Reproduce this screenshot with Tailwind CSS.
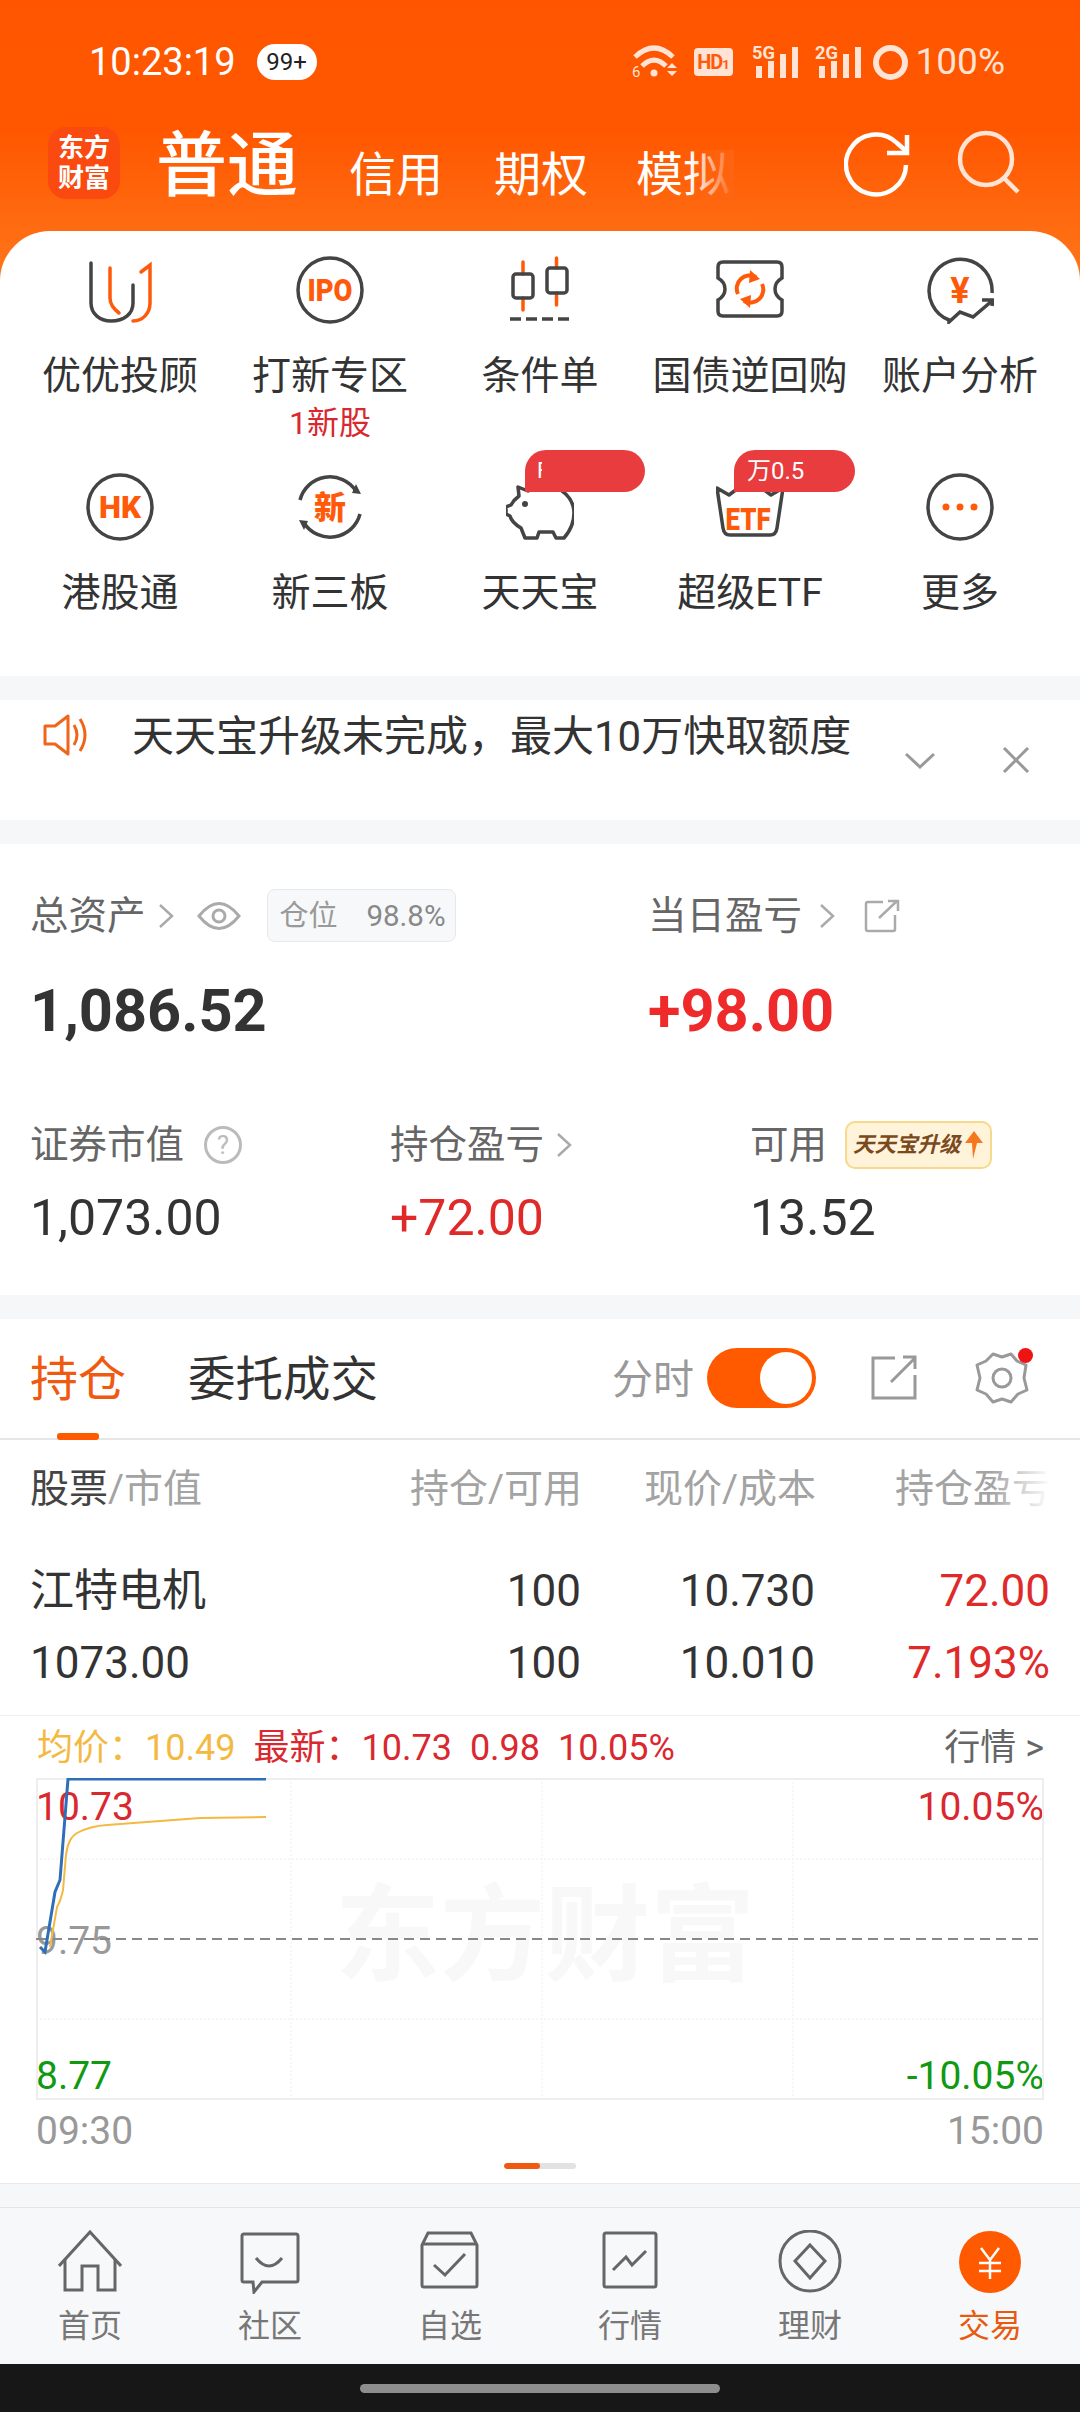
<!DOCTYPE html>
<html lang="zh-CN">
  <head>
    <meta charset="UTF-8" />
    <meta name="viewport" content="width=device-width, initial-scale=1.0" />
    <title>交易</title>
    <script src="https://cdn.jsdelivr.net/npm/@tailwindcss/browser@4"></script>
  </head>
  <body class="w-[1080px] h-[2412px] overflow-hidden bg-[#f6f7f9] font-['Roboto','Noto_Sans_CJK_SC',sans-serif] text-[#333]">
    <!-- orange header + shortcut sheet -->
    <div class="bg-[linear-gradient(180deg,#ff5500_0,#ff5700_130px,#ff7a1e_300px,#ff7a1e_100%)]">
      <!-- status bar -->
      <div class="h-[122px] flex items-center pl-[89px] pr-[75px] pt-[2px] text-white">
        <span class="text-[38px] leading-[44px]">10:23:19</span>
        <span class="ml-[21px] w-[60px] h-[36px] rounded-[18px] bg-white text-[#222] text-[24px] leading-[36px] text-center">99+</span>
        <div class="ml-auto flex items-center text-[#ffe3d4]">
          <svg width="46" height="36" viewBox="0 0 46 36" fill="none" stroke="currentColor" stroke-width="5">
            <path d="M3 13 Q22 -5 41 13" /><path d="M10 22 Q22 10 34 22" />
            <circle cx="22" cy="29" r="3.500" fill="currentColor" stroke="none" />
            <path d="M35 24 l5 -5 l5 5 z M35 27 l5 5 l5 -5 z" fill="currentColor" stroke="none" />
            <text x="0" y="33" font-size="15" font-family="Roboto" fill="currentColor" stroke="none">6</text>
          </svg>
          <span class="ml-[16px] w-[39px] h-[28px] rounded-[4px] bg-[#ffe3d4] text-[#ff5a0a] text-[20px] leading-[28px] font-bold text-center tracking-[-1px]">HD<span class="text-[13px]">1</span></span>
          <svg class="ml-[19px]" width="48" height="42" viewBox="0 -4 48 42" fill="currentColor">
            <text x="0" y="14" font-size="18" font-weight="700" font-family="Roboto" textLength="23" lengthAdjust="spacingAndGlyphs">5G</text>
            <rect x="4" y="21" width="6" height="12" /><rect x="16" y="16" width="6" height="17" /><rect x="28" y="9" width="6" height="24" /><rect x="40" y="2" width="6" height="31" />
          </svg>
          <svg class="ml-[15px]" width="48" height="42" viewBox="0 -4 48 42" fill="currentColor">
            <text x="0" y="14" font-size="18" font-weight="700" font-family="Roboto" textLength="23" lengthAdjust="spacingAndGlyphs">2G</text>
            <rect x="4" y="21" width="6" height="12" /><rect x="16" y="16" width="6" height="17" /><rect x="28" y="9" width="6" height="24" /><rect x="40" y="2" width="6" height="31" />
          </svg>
          <span class="ml-[10px] w-[35px] h-[35px] rounded-full border-[6px] border-[#ffe3d4]"></span>
          <span class="ml-[8px] text-[37px] leading-[44px]">100%</span>
        </div>
      </div>
      <!-- account type tabs -->
      <div class="h-[109px] flex items-start pl-[48px] text-white">
        <div class="mt-[5px] w-[72px] h-[72px] rounded-[18px] bg-[#fb4a10] flex items-center justify-center text-[26px] leading-[30px] font-bold text-center">东方<br />财富</div>
        <span class="ml-[36px] mt-[8px] text-[71px] leading-[72px] font-medium">普通</span>
        <span class="ml-[51px] mt-[28px] text-[47px] leading-[50px]">信用</span>
        <span class="ml-[51px] mt-[28px] text-[47px] leading-[50px]">期权</span>
        <span class="relative ml-[48px] mt-[28px] text-[47px] leading-[50px]">模拟<span class="absolute right-[-4px] top-0 h-full w-[44px] bg-[linear-gradient(90deg,#ff641200,#ff6412)]"></span></span>
        <svg class="ml-[114px] mt-[9px]" width="66" height="66" viewBox="0 0 66 66" fill="none" stroke="#fff" stroke-width="4.5">
          <path d="M62 34 A30 30 0 1 1 53 12 L62 20" /><path d="M63 4 V22 H43" />
        </svg>
        <svg class="ml-[46px] mt-[7px]" width="66" height="66" viewBox="0 0 66 66" fill="none" stroke="#ffe3d4" stroke-width="4.5">
          <circle cx="30" cy="30" r="26" /><path d="M48 49 L62 63" />
        </svg>
      </div>

      <div class="bg-white rounded-t-[50px] h-[445px] px-[15px] grid grid-cols-5 grid-rows-[242px_203px] text-[#333]">
        <div class="flex flex-col items-center pt-[25px]">
          <svg width="68" height="68" viewBox="0 0 68 68" fill="none" stroke-width="3.5" stroke-linecap="round">
            <path stroke="#444" d="M5 7 V47 C5 58 14 65 25 65 C38 65 47 58 47 47 V29" />
            <path stroke="#ff5a0a" d="M24 12 V42 Q24 50 33 57" />
            <path stroke="#ff5a0a" d="M55 16 L64 9 V47 C64 58 56 65 47 65" />
          </svg>
          <span class="mt-[27px] text-[39px] leading-[50px]">优优投顾</span>
        </div>
        <div class="flex flex-col items-center pt-[25px]">
          <svg width="68" height="68" viewBox="0 0 68 68" fill="none">
            <circle cx="34" cy="34" r="32" stroke="#444" stroke-width="3.5" />
            <text x="34" y="45" text-anchor="middle" font-family="Roboto" font-weight="900" font-size="31" fill="#ff5a0a" textLength="45" lengthAdjust="spacingAndGlyphs">IPO</text>
          </svg>
          <span class="mt-[27px] text-[39px] leading-[50px]">打新专区</span>
          <span class="mt-[7px] text-[32px] leading-[30px] text-[#d9282f]">1新股</span>
        </div>
        <div class="flex flex-col items-center pt-[25px]">
          <svg width="68" height="68" viewBox="0 0 68 68" fill="none" stroke-width="3.5">
            <path stroke="#ff5a0a" stroke-linecap="round" d="M17 6 V18 M17 42 V54 M50.500 2 V12 M50.500 37 V49" />
            <rect x="7" y="18" width="20" height="24" rx="3" stroke="#444" />
            <rect x="41" y="12" width="20" height="25" rx="3" stroke="#444" />
            <path stroke="#444" stroke-dasharray="11 5" d="M4 63 H65" />
          </svg>
          <span class="mt-[27px] text-[39px] leading-[50px]">条件单</span>
        </div>
        <div class="flex flex-col items-center pt-[25px]">
          <svg width="68" height="68" viewBox="0 0 68 68" fill="none" stroke-width="3.5">
            <path stroke="#444" d="M7 6 H61 Q66 6 66 11 V22 Q59 26 59 33 Q59 40 66 44 V55 Q66 60 61 60 H7 Q2 60 2 55 V44 Q9 40 9 33 Q9 26 2 22 V11 Q2 6 7 6 Z" />
            <path stroke="#ff5a0a" stroke-width="4" d="M22 38 A13 13 0 0 1 40 21 M46 28 A13 13 0 0 1 28 45" />
            <path fill="#ff5a0a" d="M34 14 L44 23 L33 27 Z M34 52 L24 43 L35 39 Z" />
          </svg>
          <span class="mt-[27px] text-[39px] leading-[50px]">国债逆回购</span>
        </div>
        <div class="flex flex-col items-center pt-[25px]">
          <svg width="68" height="68" viewBox="0 0 68 68" fill="none" stroke="#444" stroke-width="3.5">
            <path d="M66 37 A31.500 31.500 0 1 0 23 64 L23 66 L34 56 L47 61 L67 44 M56 44 H67 L66 50" />
            <text x="34" y="47" text-anchor="middle" font-family="Roboto" font-weight="700" font-size="36" fill="#ff5a0a" stroke="none">¥</text>
          </svg>
          <span class="mt-[27px] text-[39px] leading-[50px]">账户分析</span>
        </div>

        <div class="flex flex-col items-center">
          <svg width="68" height="68" viewBox="0 0 68 68" fill="none">
            <circle cx="34" cy="34" r="32" stroke="#444" stroke-width="3.5" />
            <text x="34" y="45" text-anchor="middle" font-family="Roboto" font-weight="900" font-size="31" fill="#ff5a0a" textLength="42" lengthAdjust="spacingAndGlyphs">HK</text>
          </svg>
          <span class="mt-[27px] text-[39px] leading-[50px]">港股通</span>
        </div>
        <div class="flex flex-col items-center">
          <svg width="68" height="68" viewBox="0 0 68 68" fill="none">
            <path stroke="#444" stroke-width="3.500" d="M4 27 A31 31 0 0 1 60 18 M64 41 A31 31 0 0 1 8 50" />
            <path fill="#444" d="M60 11 L65 21 L56 20 Z M8 57 L3 47 L12 48 Z" />
            <text x="34" y="46" text-anchor="middle" font-weight="900" font-size="32" fill="#ff5a0a" font-family="Noto Sans CJK SC">新</text>
          </svg>
          <span class="mt-[27px] text-[39px] leading-[50px]">新三板</span>
        </div>
        <div class="relative flex flex-col items-center">
          <svg width="68" height="68" viewBox="0 0 68 68" fill="none" stroke="#444" stroke-width="3.500" stroke-linejoin="round">
            <path d="M12 14 L22 18 C28 15 34 13 40 13 C56 13 68 26 68 40 C68 50 64 58 58 65 H50 L47 59 H33 L31 65 H19 L15 55 C10 52 5 47 4 43 L0 41 V34 L5 32 C7 28 9 26 13 23 Z" />
            <circle cx="19" cy="31" r="3" fill="#444" stroke="none" />
          </svg>
          <span class="mt-[27px] text-[39px] leading-[50px]">天天宝</span>
          <span class="absolute left-[90px] top-[-23px] w-[120px] h-[42px] rounded-[21px] rounded-bl-none bg-[#e83c3f] text-white text-[22px] leading-[42px] pl-[12px]"><span class="inline-block w-[5px] overflow-hidden align-top">F</span></span>
        </div>
        <div class="relative flex flex-col items-center">
          <svg width="68" height="68" viewBox="0 0 68 68" fill="none" stroke="#444" stroke-width="3.500" stroke-linejoin="round">
            <path d="M1 15 L7 55 Q8 62 14 62 H54 Q60 62 61 55 L67 15 L55 22 L47 16 H21 L13 22 Z" />
            <text x="32" y="57" text-anchor="middle" font-family="Roboto" font-weight="900" font-size="31" fill="#ff5a0a" stroke="none" textLength="45" lengthAdjust="spacingAndGlyphs">ETF</text>
          </svg>
          <span class="mt-[27px] text-[39px] leading-[50px]">超级ETF</span>
          <span class="absolute left-[89px] top-[-23px] w-[121px] h-[42px] rounded-[21px] rounded-bl-none bg-[#e83c3f] text-white text-[24px] leading-[42px] pl-[13px]">万0.5</span>
        </div>
        <div class="flex flex-col items-center">
          <svg width="68" height="68" viewBox="0 0 68 68" fill="none">
            <circle cx="34" cy="34" r="32" stroke="#444" stroke-width="3.5" />
            <circle cx="20" cy="34" r="3.500" fill="#ff5a0a" /><circle cx="34" cy="34" r="3.500" fill="#ff5a0a" /><circle cx="48" cy="34" r="3.500" fill="#ff5a0a" />
          </svg>
          <span class="mt-[27px] text-[39px] leading-[50px]">更多</span>
        </div>
      </div>
    </div>

    <!-- notice -->
    <div class="mt-[24px] h-[120px] bg-white flex items-start pl-[43px]">
      <svg class="mt-[14px]" width="48" height="42" viewBox="0 0 48 42" fill="none" stroke="#f0651a" stroke-width="3" stroke-linejoin="round">
        <path d="M2 12 H12 L25 2 V40 L12 30 H2 Z" /><path d="M31 11 Q37 21 31 31" /><path d="M37 5 Q47 21 37 37" />
      </svg>
      <span class="ml-[41px] mt-[12px] text-[42px] leading-[50px] text-[#333]">天天宝升级未完成，最大10万快取额度</span>
      <svg class="ml-[53px] mt-[52px]" width="32" height="17" viewBox="0 0 32 17" fill="none" stroke="#999" stroke-width="3"><path d="M2 2 L16 15 L30 2" /></svg>
      <svg class="ml-[66px] mt-[47px]" width="28" height="26" viewBox="0 0 28 26" fill="none" stroke="#999" stroke-width="3"><path d="M2 1 L26 25 M26 1 L2 25" /></svg>
    </div>

    <!-- assets -->
    <div class="mt-[24px] h-[451px] bg-white pl-[30px] pt-[45px]">
      <div class="flex">
        <div class="w-[618px]">
          <div class="flex items-center h-[53px] text-[38.500px] leading-[50px] text-[#666]">
            <span>总资产</span>
            <svg class="ml-[12px]" width="16" height="26" viewBox="0 0 16 26" fill="none" stroke="#aaa" stroke-width="2.500"><path d="M2 2 L14 13 L2 24" /></svg>
            <svg class="ml-[23px]" width="44" height="30" viewBox="0 0 44 30" fill="none" stroke="#aaa" stroke-width="3"><path d="M2 15 Q22 -10 42 15 Q22 40 2 15 Z" /><circle cx="22" cy="15" r="6" /></svg>
            <span class="ml-[26px] w-[189px] h-[53px] rounded-[8px] border border-[#e8e8ea] bg-[#f7f8fa] flex items-center justify-between pl-[12px] pr-[9px] text-[#999]">
              <span class="text-[29px]">仓位</span><span class="text-[29.500px] text-[#888]">98.8%</span>
            </span>
          </div>
          <div class="mt-[34px] text-[59.500px] leading-[70px] font-bold text-[#333]">1,086.52</div>
        </div>
        <div>
          <div class="flex items-center h-[53px] text-[38.500px] leading-[50px] text-[#666]">
            <span>当日盈亏</span>
            <svg class="ml-[17px]" width="16" height="26" viewBox="0 0 16 26" fill="none" stroke="#aaa" stroke-width="2.500"><path d="M2 2 L14 13 L2 24" /></svg>
            <svg class="ml-[29px]" width="36" height="34" viewBox="0 0 36 34" fill="none" stroke="#aaa" stroke-width="2.500"><path d="M19 3 H4 Q2 3 2 5 V30 Q2 32 4 32 H29 Q31 32 31 30 V16" /><path d="M15 19 L33 2 M24 2 H34 V12" /></svg>
          </div>
          <div class="mt-[34px] text-[59.500px] leading-[70px] font-bold text-[#ee2a2a]">+98.00</div>
        </div>
      </div>
      <div class="mt-[75px] flex">
        <div class="w-[360px]">
          <div class="flex items-center h-[48px] text-[38.500px] leading-[50px] text-[#666]">
            <span>证券市值</span>
            <span class="ml-[20px] w-[38px] h-[38px] rounded-full border-[3px] border-[#bbb] text-[#bbb] text-[26px] leading-[32px] text-center">?</span>
          </div>
          <div class="mt-[19px] text-[50px] leading-[60px] text-[#333]">1,073.00</div>
        </div>
        <div class="w-[360px]">
          <div class="flex items-center h-[48px] text-[38.500px] leading-[50px] text-[#666]">
            <span>持仓盈亏</span>
            <svg class="ml-[12px]" width="16" height="26" viewBox="0 0 16 26" fill="none" stroke="#aaa" stroke-width="2.500"><path d="M2 2 L14 13 L2 24" /></svg>
          </div>
          <div class="mt-[19px] text-[50px] leading-[60px] text-[#e02a2a]">+72.00</div>
        </div>
        <div>
          <div class="flex items-center h-[48px] text-[38.500px] leading-[50px] text-[#666]">
            <span>可用</span>
            <span class="ml-[18px] w-[147px] h-[48px] rounded-[10px] border-2 border-[#f6d98a] bg-[#fff3da] flex items-center pl-[6px] text-[21.5px] font-bold italic text-[#7a4a1e]">
              天天宝升级
              <svg class="ml-[3px]" width="20" height="30" viewBox="0 0 20 30"><path fill="#f7771e" d="M10 1 L19 13 H13 L9 29 L8 13 H1 Z" /></svg>
            </span>
          </div>
          <div class="mt-[19px] text-[50px] leading-[60px] text-[#333]">13.52</div>
        </div>
      </div>
    </div>

    <!-- positions -->
    <div class="mt-[24px] h-[865px] bg-white border-b border-[#e9e9e9]">
      <div class="relative h-[121px] border-b-2 border-[#e6e6e6] flex items-center pl-[30px] pr-[50px] pb-[2px]">
        <span class="pt-[5px] text-[48px] leading-[60px] text-[#f05a10]">持仓</span>
        <span class="pt-[5px] ml-[62px] text-[47.5px] leading-[60px] text-[#333]">委托成交</span>
        <span class="pt-[5px] ml-auto text-[41px] leading-[60px] text-[#999]">分时</span>
        <span class="ml-[13px] w-[109px] h-[60px] rounded-[30px] bg-[#ff5a00] flex items-center justify-end pr-[4px]"><span class="w-[52px] h-[52px] rounded-full bg-white"></span></span>
        <svg class="ml-[55px]" width="46" height="46" viewBox="0 0 46 46" fill="none" stroke="#999" stroke-width="3"><path d="M24 3 H2 V43 H44 V20" /><path d="M20 27 L44 3 M32 2 H44 V14" /></svg>
        <svg class="ml-[57px]" width="56" height="54" viewBox="0 0 56 54" fill="none" stroke="#999" stroke-width="3" stroke-linejoin="round">
          <path d="M19 3 L28 6 L37 3 L43 10 L52 14 L50 27 L53 39 L44 43 L37 51 L28 48 L19 51 L12 43 L3 39 L6 27 L3 14 L12 10 Z" />
          <circle cx="28" cy="27" r="9" />
        </svg>
        <span class="absolute left-[1018px] top-[29px] w-[15px] h-[15px] rounded-full bg-[#f01313]"></span>
        <span class="absolute left-[57px] bottom-[-2px] w-[42px] h-[7px] rounded-[3px] bg-[#ff5a00]"></span>
      </div>

      <div class="h-[98px] flex items-center pl-[30px] pr-[29px] text-[39px] leading-[50px] text-[#a3a3a3]">
        <span class="flex-1"><span class="text-[#444]">股票</span>/市值</span>
        <span class="w-[240px] text-right">持仓/可用</span>
        <span class="w-[234px] text-right">现价/成本</span>
        <span class="relative w-[235px] text-right">持仓盈亏<span class="absolute right-0 top-0 h-full w-[60px] bg-[linear-gradient(90deg,#ffffff00,#ffffff)]"></span></span>
      </div>
      <div class="mt-[23px] flex items-center h-[60px] pl-[30px] pr-[30px] text-[44px] leading-[60px]">
        <span class="flex-1 text-[44px]">江特电机</span>
        <span class="w-[240px] text-right">100</span>
        <span class="w-[234px] text-right">10.730</span>
        <span class="w-[235px] text-right text-[#e02a2a]">72.00</span>
      </div>
      <div class="mt-[12px] flex items-center h-[60px] pl-[30px] pr-[30px] text-[44px] leading-[60px]">
        <span class="flex-1">1073.00</span>
        <span class="w-[240px] text-right">100</span>
        <span class="w-[234px] text-right">10.010</span>
        <span class="w-[235px] text-right text-[#e02a2a]">7.193%</span>
      </div>

      <div class="mt-[22px] border-t border-[#eeeeee] pt-[7px] px-[36px]">
        <div class="flex gap-[18px] text-[36px] leading-[50px] text-[#d9282f] pl-[1px]">
          <span class="text-[#f4b942]">均价：10.49</span>
          <span>最新：10.73</span>
          <span>0.98</span>
          <span>10.05%</span>
          <span class="ml-auto text-[#666]">行情 &gt;</span>
        </div>
        <!-- minute chart -->
        <div class="relative mt-[5px] w-[1008px] h-[322px] overflow-hidden">
          <span class="absolute left-[299px] top-[94px] text-[105px] leading-[130px] font-bold text-[#f8f8f8] whitespace-nowrap">东方财富</span>
          <span class="absolute left-0 top-[9px] text-[39px] leading-[40px] text-[#d9282f]">10.73</span>
          <span class="absolute right-0 top-[9px] text-[39px] leading-[40px] text-[#d9282f]">10.05%</span>
          <span class="absolute left-0 top-[143px] text-[39px] leading-[40px] text-[#999]">9.75</span>
          <span class="absolute left-0 top-[278px] text-[39px] leading-[40px] text-[#119911]">8.77</span>
          <span class="absolute right-0 top-[278px] text-[39px] leading-[40px] text-[#119911]">-10.05%</span>
          <svg class="absolute inset-0" width="1008" height="322" viewBox="36 1778 1008 322" fill="none">
            <rect x="37" y="1779" width="1006" height="320" stroke="#eeeeee" stroke-width="2" />
            <path stroke="#eeeeee" stroke-dasharray="2 2" d="M291 1778 V2100 M542 1778 V2100 M793 1778 V2100 M36 1859 H1044 M36 2019 H1044" />
            <path stroke="#888888" stroke-width="2" stroke-dasharray="10 6" d="M36 1939 H1044" />
            <path stroke="#f4b942" stroke-width="2" d="M50 1947 L57 1907 Q61 1900 63 1890 L66 1855 Q68 1838 77 1833 Q90 1826 107 1825 L200 1818 L266 1817" />
            <path stroke="#2f6fb8" stroke-width="3" d="M40 1947 L45 1952 L55 1892 L60 1880 L68 1779 H266" />
          </svg>
        </div>
        <div class="mt-[9px] flex justify-between text-[39px] leading-[44px] text-[#999]">
          <span>09:30</span><span>15:00</span>
        </div>
        <div class="mt-[10px] mx-auto w-[72px] h-[6px] rounded-[3px] bg-[#e2e2e2] overflow-hidden"><div class="w-[36px] h-full rounded-[3px] bg-[#f05a10]"></div></div>
      </div>
    </div>

    <!-- bottom nav -->
    <div class="mt-[23px] h-[157px] border-t border-[#e4e4e4] pt-[22px] bg-[#f7f8fa] grid grid-cols-6 text-[32px] leading-[40px] text-[#777]">
      <div class="flex flex-col items-center">
        <svg width="64" height="64" viewBox="0 0 64 64" fill="none" stroke="#666" stroke-width="3"><path d="M1 36 L32 2 L63 36" /><path d="M7 29 V60 H24 V36 H40 V60 H57 V29" /></svg>
        <span class="mt-[12px]">首页</span>
      </div>
      <div class="flex flex-col items-center">
        <svg width="64" height="64" viewBox="0 0 64 64" fill="none" stroke="#666" stroke-width="3"><path d="M6 4 H58 Q60 4 60 6 V50 Q60 52 58 52 H24 L16 62 L15 52 H6 Q4 52 4 50 V6 Q4 4 6 4 Z" /><path d="M18 28 Q31 44 44 28" /></svg>
        <span class="mt-[12px]">社区</span>
      </div>
      <div class="flex flex-col items-center">
        <svg width="64" height="64" viewBox="0 0 64 64" fill="none" stroke="#666" stroke-width="3"><path d="M10 3 H53 L59 15 V55 Q59 57 57 57 H6 Q4 57 4 55 V15 Z" /><path d="M4 14 H59" /><path d="M16 35 L27 45 L47 24" /></svg>
        <span class="mt-[12px]">自选</span>
      </div>
      <div class="flex flex-col items-center">
        <svg width="64" height="64" viewBox="0 0 64 64" fill="none" stroke="#666" stroke-width="3"><rect x="6" y="3" width="52" height="54" rx="2" /><path d="M15 40 L28 27 L34 35 L48 21" /></svg>
        <span class="mt-[12px]">行情</span>
      </div>
      <div class="flex flex-col items-center">
        <svg width="64" height="64" viewBox="0 0 64 64" fill="none" stroke="#666" stroke-width="3"><circle cx="32" cy="31" r="30" /><path d="M32 15 L47 31 L32 48 L17 31 Z" /></svg>
        <span class="mt-[12px]">理财</span>
      </div>
      <div class="flex flex-col items-center">
        <svg width="64" height="64" viewBox="0 0 64 64" fill="none"><circle cx="32" cy="32" r="31" fill="#ff5a00" /><path stroke="#fff" stroke-width="2.500" d="M23 18 L32 30 L41 18 M21 33 H43 M21 41 H43 M32 30 V49" /></svg>
        <span class="mt-[12px] text-[#e85a10]">交易</span>
      </div>
    </div>
    <!-- system gesture bar -->
    <div class="h-[48px] bg-[#171717] flex items-center justify-center"><span class="w-[360px] h-[9px] rounded-[5px] bg-[#8e8e8e]"></span></div>
  </body>
</html>
